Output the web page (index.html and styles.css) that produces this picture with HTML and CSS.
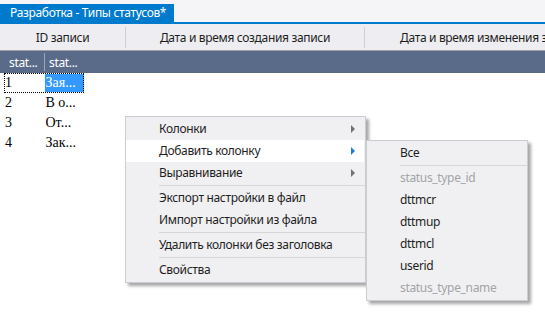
FILE: index.html
```html
<!DOCTYPE html>
<html lang="ru">
<head>
<meta charset="utf-8">
<title>Разработка - Типы статусов</title>
<link rel="stylesheet" href="styles.css">
</head>
<body>
<div class="app">
  <div class="tabstrip">
    <div class="tab">Разработка - Типы статусов*</div>
  </div>
  <div class="colheaders">
    <div class="ch c1">ID записи</div>
    <div class="sep"></div>
    <div class="ch c2">Дата и время создания записи</div>
    <div class="sep"></div>
    <div class="ch c3">Дата и время изменения записи</div>
  </div>
  <div class="grid">
    <div class="ghead">
      <div class="gh g1">stat...</div>
      <div class="gsep"></div>
      <div class="gh g2">stat...</div>
    </div>
    <div class="row focus">
      <div class="cell g1">1</div>
      <div class="cell g2 sel">Зая...</div>
    </div>
    <div class="row">
      <div class="cell g1">2</div>
      <div class="cell g2">В о...</div>
    </div>
    <div class="row">
      <div class="cell g1">3</div>
      <div class="cell g2">От...</div>
    </div>
    <div class="row">
      <div class="cell g1">4</div>
      <div class="cell g2">Зак...</div>
    </div>
  </div>

  <div class="menu main-menu">
    <div class="item sub">Колонки<span class="arrow"></span></div>
    <div class="item sub hot">Добавить колонку<span class="arrow"></span></div>
    <div class="item sub">Выравнивание<span class="arrow"></span></div>
    <div class="msep"></div>
    <div class="item">Экспорт настройки в файл</div>
    <div class="item">Импорт настройки из файла</div>
    <div class="msep"></div>
    <div class="item">Удалить колонки без заголовка</div>
    <div class="msep"></div>
    <div class="item">Свойства</div>
  </div>

  <div class="menu sub-menu">
    <div class="item">Все</div>
    <div class="msep"></div>
    <div class="item disabled">status_type_id</div>
    <div class="item">dttmcr</div>
    <div class="item">dttmup</div>
    <div class="item">dttmcl</div>
    <div class="item">userid</div>
    <div class="item disabled">status_type_name</div>
  </div>
</div>
</body>
</html>
```

FILE: styles.css
```css
html, body {
  margin: 0;
  padding: 0;
  background: #ffffff;
}
body {
  width: 545px;
  height: 316px;
  overflow: hidden;
  font-family: "Noto Sans", "Open Sans", sans-serif;
  font-size: 12px;
  letter-spacing: -0.33px;
  color: #1e1e1e;
}
.app {
  position: relative;
  width: 545px;
  height: 316px;
  overflow: hidden;
}
.tabstrip {
  height: 22px;
  background: #f5f5f7;
  border-bottom: 2px solid #007acc;
  display: flex;
  align-items: flex-end;
}
.tab {
  box-sizing: border-box;
  width: 174px;
  height: 18px;
  line-height: 18px;
  padding-left: 10px;
  background: #007acc;
  color: #ffffff;
  white-space: nowrap;
}
.colheaders {
  height: 26px;
  background: #eeeef2;
  border-bottom: 1px solid #a0a0a0;
  display: flex;
  align-items: center;
  white-space: nowrap;
  overflow: hidden;
}
.ch {
  text-align: center;
  flex: none;
}
.c1 { width: 125px; }
.c2 { width: 238px; }
.c3 {
  width: 180px;
  text-align: left;
  padding-left: 35px;
  overflow: hidden;
}
.sep {
  flex: none;
  width: 1px;
  height: 21px;
  background: #cfcfd4;
}
.grid {
  background: #ffffff;
}
.ghead {
  height: 22px;
  background: #5a6b8a;
  color: #ffffff;
  display: flex;
  align-items: center;
}
.gh.g1 {
  width: 44px;
  box-sizing: border-box;
  padding-left: 9px;
}
.gsep {
  width: 1px;
  height: 18px;
  background: #9aa6bb;
}
.gh.g2 {
  padding-left: 4px;
}
.row {
  height: 20px;
  display: flex;
  margin-left: 4px;
  width: 80px;
  box-sizing: border-box;
  font-family: "Liberation Serif", serif;
  font-size: 14px;
  letter-spacing: 0;
  line-height: 19px;
  color: #000000;
}
.row.focus {
  outline: 1px dotted #000000;
  outline-offset: -1px;
}
.cell.g1 {
  width: 40px;
  padding-left: 1px;
}
.cell.g2 {
  width: 39px;
  padding-left: 1px;
}
.cell.sel {
  background: #3399ff;
  color: #ffffff;
  height: 18px;
  margin-top: 1px;
  line-height: 17px;
}
.menu {
  position: absolute;
  box-sizing: border-box;
  background: #f0f0f2;
  border: 1px solid #ccccd2;
  padding: 1px 0;
  box-shadow: 3px 3px 3px rgba(0, 0, 0, 0.35);
}
.main-menu {
  left: 125px;
  top: 116px;
  width: 241px;
}
.sub-menu {
  left: 366px;
  top: 140px;
  width: 162px;
}
.item {
  position: relative;
  height: 22px;
  line-height: 22px;
  padding-left: 33px;
  white-space: nowrap;
}
.item.hot {
  background: #ffffff;
  margin-right: 1px;
}
.item.disabled {
  color: #a2a4a8;
}
.arrow {
  position: absolute;
  right: 10px;
  top: 7px;
  width: 0;
  height: 0;
  border-top: 4px solid transparent;
  border-bottom: 4px solid transparent;
  border-left: 4px solid #717171;
}
.hot .arrow {
  border-left-color: #1c7fd8;
  right: 9px;
}
.msep {
  height: 1px;
  margin: 1px 0 1px 33px;
  background: #d5d5da;
}
```
